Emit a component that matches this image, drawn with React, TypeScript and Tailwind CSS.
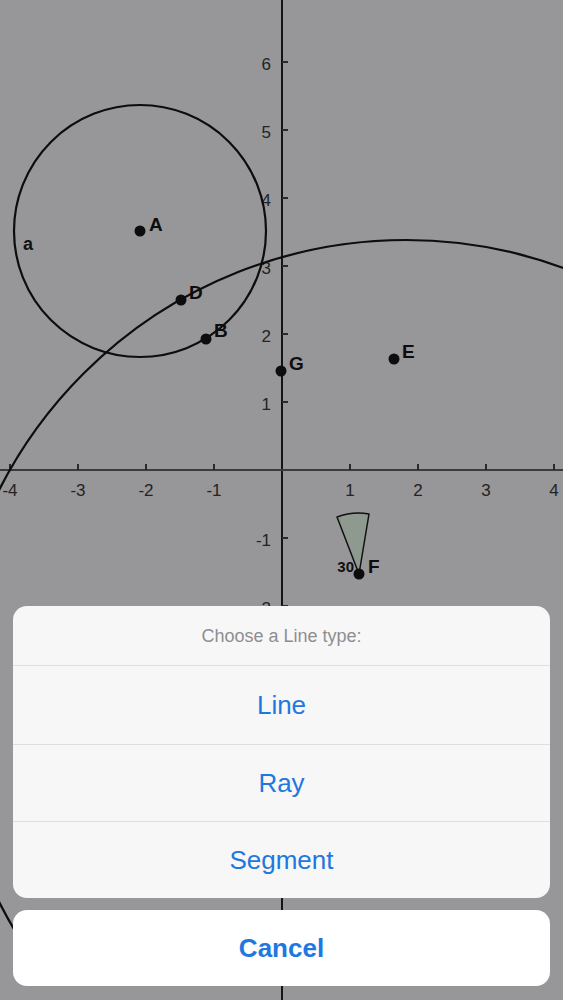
import React from 'react';

const ORIGIN_X = 282;
const ORIGIN_Y = 470;
const UNIT = 68;

const xTicks = [-4, -3, -2, -1, 1, 2, 3, 4];
const yTicks = [-2, -1, 1, 2, 3, 4, 5, 6];

const points = [
  { id: 'A', x: 140, y: 231, lx: 149, ly: 231 },
  { id: 'D', x: 181, y: 300, lx: 189, ly: 299 },
  { id: 'B', x: 206, y: 339, lx: 214, ly: 337 },
  { id: 'G', x: 281, y: 371, lx: 289, ly: 370 },
  { id: 'E', x: 394, y: 359, lx: 402, ly: 358 },
  { id: 'F', x: 359, y: 574, lx: 368, ly: 573 },
];

const GeometryCanvas: React.FC = () => {
  return (
    <svg width="563" height="1000" viewBox="0 0 563 1000" className="block">
      <defs>
        <clipPath id="upper">
          <rect x="0" y="0" width="563" height="960" />
        </clipPath>
      </defs>

      {/* axes */}
      <line x1={ORIGIN_X} y1={0} x2={ORIGIN_X} y2={1000} stroke="#141414" strokeWidth="2" />
      <line x1={0} y1={ORIGIN_Y} x2={563} y2={ORIGIN_Y} stroke="#3a3a3a" strokeWidth="2" />

      {xTicks.map((t) => {
        const x = ORIGIN_X + t * UNIT;
        return (
          <g key={`x${t}`}>
            <line x1={x} y1={ORIGIN_Y} x2={x} y2={ORIGIN_Y - 6} stroke="#2a2a2a" strokeWidth="2" />
            <text x={x} y={ORIGIN_Y + 26} textAnchor="middle" fontSize="17" fill="#232323" fontFamily="'Liberation Sans', Arial, sans-serif">
              {t}
            </text>
          </g>
        );
      })}

      {yTicks.map((t) => {
        const y = ORIGIN_Y - t * UNIT;
        return (
          <g key={`y${t}`}>
            <line x1={ORIGIN_X} y1={y} x2={ORIGIN_X + 6} y2={y} stroke="#2a2a2a" strokeWidth="2" />
            <text x={ORIGIN_X - 11} y={y + 8} textAnchor="end" fontSize="17" fill="#232323" fontFamily="'Liberation Sans', Arial, sans-serif">
              {t}
            </text>
          </g>
        );
      })}

      {/* circle a */}
      <circle cx="140" cy="231" r="126" fill="none" stroke="#0d0d0d" strokeWidth="2.2" />
      {/* large arc */}
      <circle cx="406" cy="696" r="456" fill="none" stroke="#0d0d0d" strokeWidth="2.2" clipPath="url(#upper)" />

      {/* angle sector at F */}
      <path d="M359 574 L337 517 A61 61 0 0 1 369 514 Z" fill="#8e9a8f" stroke="#111" strokeWidth="1.5" strokeLinejoin="round" />

      <text x="28" y="250" textAnchor="middle" fontSize="18" fontWeight="bold" fill="#111" fontFamily="'Liberation Sans', Arial, sans-serif">
        a
      </text>
      <text x="354" y="572" textAnchor="end" fontSize="15" fontWeight="bold" fill="#111" fontFamily="'Liberation Sans', Arial, sans-serif">
        30
      </text>

      {points.map((p) => (
        <g key={p.id}>
          <circle cx={p.x} cy={p.y} r="5.5" fill="#0d0d0d" />
          <text x={p.lx} y={p.ly} fontSize="19" fontWeight="bold" fill="#0d0d0d" fontFamily="'Liberation Sans', Arial, sans-serif">
            {p.id}
          </text>
        </g>
      ))}
    </svg>
  );
};

const options = [
  { label: 'Line', cls: 'h-[79px] border-b border-[#dedede]' },
  { label: 'Ray', cls: 'h-[77px] border-b border-[#dedede]' },
  { label: 'Segment', cls: 'h-[76px]' },
];

const ActionSheet: React.FC = () => {
  return (
    <div className="absolute inset-x-0 bottom-0 flex flex-col gap-3 px-[13px] pb-[14px] font-['Liberation_Sans',Arial,sans-serif]">
      <div className="flex flex-col overflow-hidden rounded-[14px] bg-[#f7f7f7]">
        <div className="flex h-[60px] items-center justify-center border-b border-[#dedede] pt-[2px] text-[18px] text-[#8e8e92]">
          Choose a Line type:
        </div>
        {options.map((o) => (
          <button key={o.label} className={`flex items-center justify-center text-[26px] text-[#1e78e0] ${o.cls}`}>
            {o.label}
          </button>
        ))}
      </div>
      <button className="flex h-[76px] items-center justify-center rounded-[14px] bg-white text-[26px] font-bold text-[#1e78e0]">
        Cancel
      </button>
    </div>
  );
};

export default function App() {
  return (
    <div className="relative h-[1000px] w-full overflow-hidden bg-[#979699]">
      <GeometryCanvas />
      <ActionSheet />
    </div>
  );
}
